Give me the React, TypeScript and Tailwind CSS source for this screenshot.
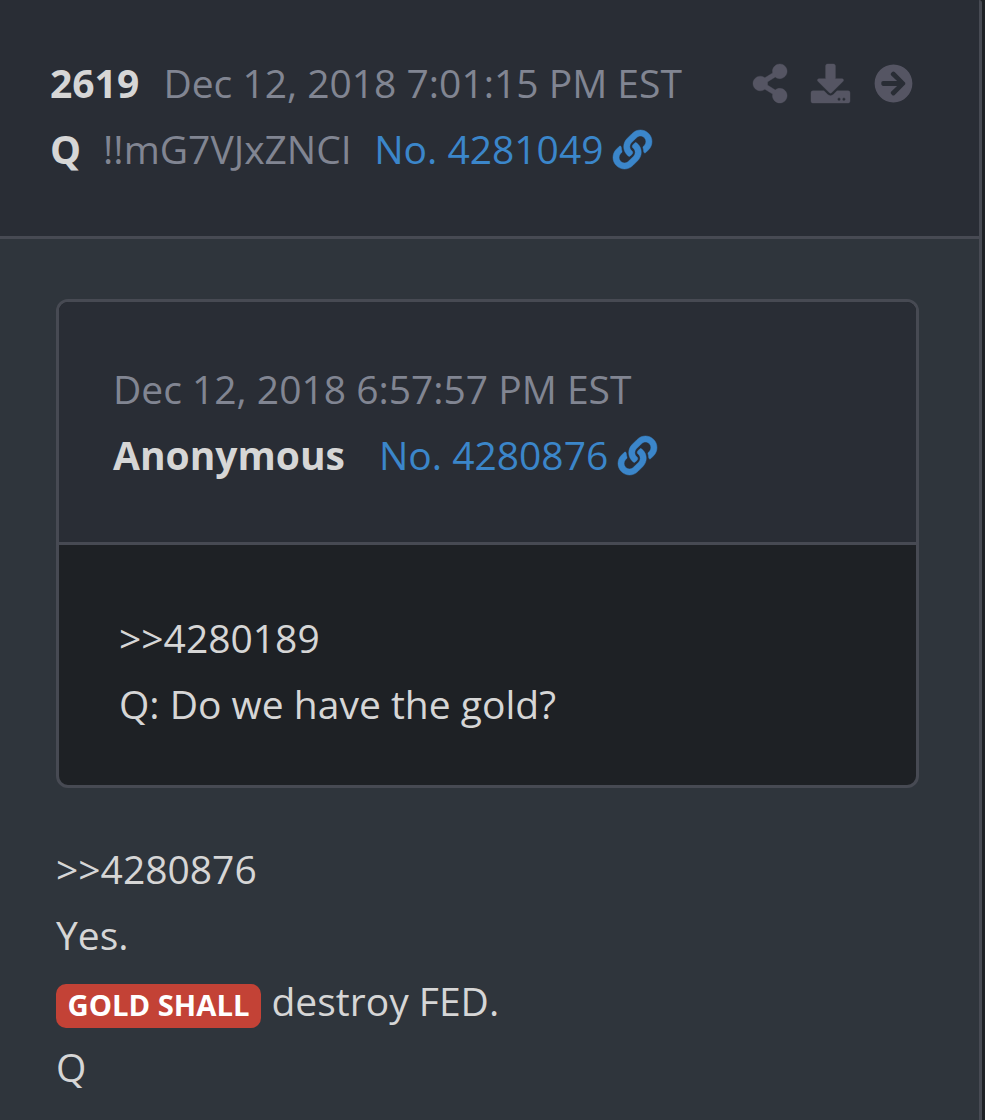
import React from 'react';
import { FaShareAlt, FaDownload, FaArrowCircleRight, FaLink } from 'react-icons/fa';

export default function App() {
  return (
    <div className="h-[1120px] w-[985px] overflow-hidden bg-[#1e2125] font-['Open_Sans',sans-serif] text-[39px] leading-[66px] text-[#d6d6d6]">
      <article className="h-full w-[982px] rounded-tr-[3px] border-r-[3px] border-[#474a53] bg-[#2f353c]">
        <header className="flex h-[239px] justify-between border-b-[3px] border-[#474a53] bg-[#292d35] pl-[50px] pr-[66.5px] pt-[50px]">
          <div className="whitespace-nowrap">
            <div className="flex">
              <b className="mr-[24.2px]">2619</b>
              <time className="text-[#818592]">Dec 12, 2018 7:01:15 PM EST</time>
            </div>
            <div className="flex">
              <b className="mr-[22px]">Q</b>
              <span className="mr-[22.5px] text-[#818592]">!!mG7VJxZNCI</span>
              <a className="flex items-center text-[#3b86ca]">No. 4281049<FaLink className="ml-[9.5px] mt-px size-[39px] overflow-visible" stroke="currentColor" strokeWidth={6} /></a>
            </div>
          </div>
          <div className="flex h-[67px] items-center text-[#555563]">
            <FaShareAlt className="mr-[23.2px] h-[39px] w-[34.1px] overflow-visible" stroke="currentColor" strokeWidth={5} />
            <FaDownload className="mr-[24px] size-[39px] overflow-visible" stroke="currentColor" strokeWidth={5} />
            <FaArrowCircleRight className="size-[39px]" />
          </div>
        </header>
        <main className="px-[56px] pt-[60px]">
          <section className="mr-[4px] h-[489px] overflow-hidden rounded-[12px] border-[3px] border-[#474a53] bg-[#1e2125]">
            <header className="h-[243px] border-b-[3px] border-[#474a53] bg-[#292d35] pl-[54px] pt-[54px]">
              <time className="block text-[#818592]">Dec 12, 2018 6:57:57 PM EST</time>
              <div className="flex">
                <b className="mr-[34px]">Anonymous</b>
                <a className="flex items-center text-[#3b86ca]">No. 4280876<FaLink className="ml-[10px] mt-px size-[39px] overflow-visible" stroke="currentColor" strokeWidth={6} /></a>
              </div>
            </header>
            <div className="pl-[60px] pt-[60px]">
              <p>&gt;&gt;4280189</p>
              <p>Q: Do we have the gold?</p>
            </div>
          </section>
          <div className="pt-[48px]">
            <p>&gt;&gt;4280876</p>
            <p>Yes.</p>
            <p className="flex h-[66px]"><span className="mr-[10.5px] mt-[16px] h-[44px] w-[205px] rounded-[10px] bg-[#c34236] text-center text-[29.25px] font-bold leading-[43px] text-white">GOLD SHALL</span>destroy FED.</p>
            <p>Q</p>
          </div>
        </main>
      </article>
    </div>
  );
}
